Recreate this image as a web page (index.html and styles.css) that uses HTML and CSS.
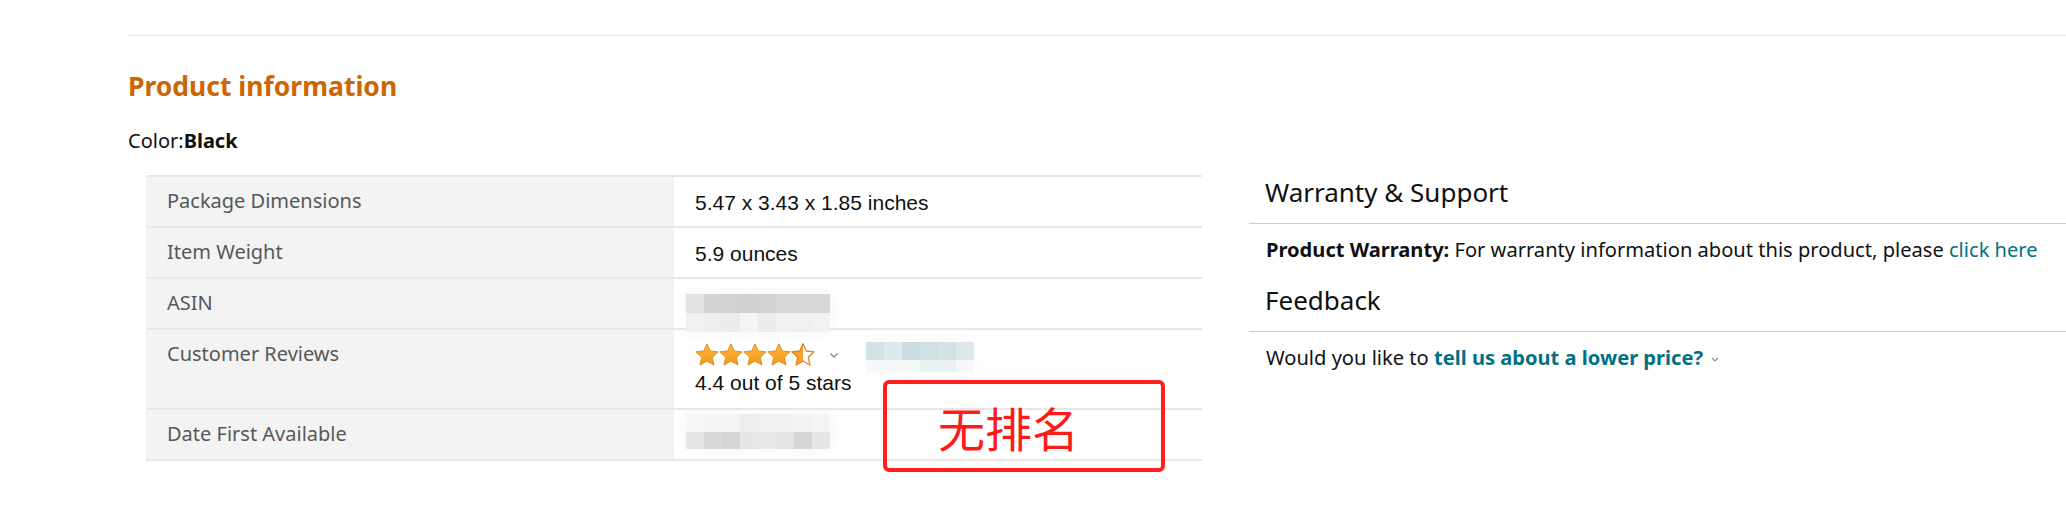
FILE: index.html
```html
<!DOCTYPE html>
<html lang="en">
<head>
<meta charset="utf-8">
<title>Product information</title>
<link rel="stylesheet" href="styles.css">
</head>
<body>
<div class="page">
  <hr class="rule">
  <h2 class="title">Product information</h2>
  <div class="color-line">Color:<b>Black</b></div>
  <div class="content">
    <div class="table-wrap">
      <table class="specs">
        <tr><th>Package Dimensions</th><td>5.47 x 3.43 x 1.85 inches</td></tr>
        <tr><th>Item Weight</th><td>5.9 ounces</td></tr>
        <tr><th>ASIN</th><td><div class="blur blur-asin"><span></span><span></span><span></span><span></span><span></span><span></span><span></span><span></span><span></span><span></span><span></span><span></span><span></span><span></span><span></span><span></span></div></td></tr>
        <tr class="reviews"><th>Customer Reviews</th><td>
          <div class="stars-line">
            <svg class="stars" width="120" height="24" viewBox="0 0 120 24">
              <defs>
                <linearGradient id="g" x1="0" y1="0" x2="0" y2="1">
                  <stop offset="0" stop-color="#ffb547"/>
                  <stop offset="1" stop-color="#f7990f"/>
                </linearGradient>
                <linearGradient id="h" x1="0" y1="0" x2="1" y2="0">
                  <stop offset="0.5" stop-color="#fba427"/>
                  <stop offset="0.5" stop-color="#ffffff"/>
                </linearGradient>
                <path id="st" d="M12 0.8 L15.3 8 L23.1 8.8 L17.3 14.2 L18.9 22 L12 18 L5.1 22 L6.7 14.2 L0.9 8.8 L8.7 8 Z"/>
              </defs>
              <g stroke="#e2821a" stroke-width="0.9" stroke-linejoin="round">
                <use href="#st" x="0" fill="url(#g)"/>
                <use href="#st" x="24" fill="url(#g)"/>
                <use href="#st" x="48" fill="url(#g)"/>
                <use href="#st" x="72" fill="url(#g)"/>
                <use href="#st" x="96" fill="url(#h)" stroke-width="1.3"/>
              </g>
            </svg>
            <svg class="chev" width="10" height="7" viewBox="0 0 10 7"><path d="M1.5 1.5 L5 5 L8.5 1.5" fill="none" stroke="#8a8d8d" stroke-width="1.4"/></svg>
            <div class="blur blur-count"><span></span><span></span><span></span><span></span><span></span><span></span><span></span><span></span><span></span><span></span><span></span><span></span></div>
          </div>
          <div class="rating-text">4.4 out of 5 stars</div>
        </td></tr>
        <tr><th>Date First Available</th><td><div class="blur blur-date"><span></span><span></span><span></span><span></span><span></span><span></span><span></span><span></span><span></span><span></span><span></span><span></span><span></span><span></span><span></span><span></span></div></td></tr>
      </table>
      <div class="annotation">无排名</div>
    </div>
    <div class="side">
      <h3 class="side-title">Warranty &amp; Support</h3>
      <p class="side-text"><b>Product Warranty:</b> For warranty information about this product, please <a href="#">click here</a></p>
      <h3 class="side-title">Feedback</h3>
      <p class="side-text">Would you like to <a href="#" class="strong-link">tell us about a lower price?</a> <svg class="chev small" width="10" height="7" viewBox="0 0 10 7"><path d="M2 2 L5 5 L8 2" fill="none" stroke="#8a8d8d" stroke-width="1.2"/></svg></p>
    </div>
  </div>
</div>
</body>
</html>
```
FILE: styles.css
```css
html, body {
  margin: 0;
  padding: 0;
  background: #fff;
}
body {
  font-family: "Noto Sans", "Open Sans", Arial, sans-serif;
  color: #0f1111;
}
.page {
  padding: 35px 0 70px 128px;
}
.rule {
  margin: 0;
  border: 0;
  border-top: 1px solid #e7e7e7;
  height: 0;
}
.title {
  margin: 0;
  padding-top: 33px;
  font-size: 26.5px;
  line-height: 34px;
  font-weight: 700;
  color: #cc6600;
}
.color-line {
  margin-top: 25px;
  font-size: 20px;
  line-height: 26px;
}
.color-line b {
  font-weight: 700;
}
.content {
  display: flex;
  margin-top: 21px;
}
.table-wrap {
  position: relative;
  margin-left: 18px;
  width: 1056px;
  flex: none;
}
.specs {
  width: 100%;
  border-collapse: collapse;
  border-top: 2px solid #e7e7e7;
}
.specs th, .specs td {
  border-bottom: 2px solid #e7e7e7;
  vertical-align: top;
  text-align: left;
  line-height: 26px;
}
.specs th {
  width: 486px;
  padding: 11px 21px 12px;
  background: #f3f3f3;
  font-size: 20px;
  font-weight: 400;
  color: #565959;
}
.specs td {
  padding: 13px 21px 10px;
  font-family: "Liberation Sans", Arial, sans-serif;
  font-size: 21px;
  color: #0f1111;
}
.reviews td {
  padding-top: 14px;
  padding-bottom: 12px;
}
.stars-line {
  display: flex;
  align-items: center;
  height: 30px;
  margin-top: -4px;
}
.stars {
  display: block;
  flex: none;
}
.chev {
  display: block;
  flex: none;
  margin-left: 14px;
}
.rating-text {
  line-height: 26px;
}
.blur {
  display: grid;
  grid-auto-flow: column;
  grid-auto-columns: 18px;
  width: max-content;
  border-radius: 10px;
  box-shadow: 0 0 8px 7px #fbfbfb;
  background: #fbfbfb;
}
.blur span { display: block; }
.blur-asin {
  grid-template-rows: 19px 19px;
  margin: 2px 0 -14px -9px;
}
.blur-date {
  grid-template-rows: 18px 17px;
  margin: -9px 0 0 -9px;
}
.blur-asin span:nth-child(1) { background: #e2e2e2; }
.blur-asin span:nth-child(2) { background: #f1f1f1; }
.blur-asin span:nth-child(3) { background: #d4d4d4; }
.blur-asin span:nth-child(4) { background: #eeeeee; }
.blur-asin span:nth-child(5) { background: #d2d2d2; }
.blur-asin span:nth-child(6) { background: #ececec; }
.blur-asin span:nth-child(7) { background: #cfd1d2; }
.blur-asin span:nth-child(8) { background: #f3f5f6; }
.blur-asin span:nth-child(9) { background: #d3d3d3; }
.blur-asin span:nth-child(10) { background: #ececec; }
.blur-asin span:nth-child(11) { background: #d7d8d9; }
.blur-asin span:nth-child(12) { background: #f1f1f1; }
.blur-asin span:nth-child(13) { background: #d8d8d8; }
.blur-asin span:nth-child(14) { background: #f0f0f0; }
.blur-asin span:nth-child(15) { background: #d5d8d9; }
.blur-asin span:nth-child(16) { background: #f2f2f2; }

.blur-date span:nth-child(1) { background: #f6f6f6; }
.blur-date span:nth-child(2) { background: #e6e6e6; }
.blur-date span:nth-child(3) { background: #f4f4f4; }
.blur-date span:nth-child(4) { background: #d8d8d8; }
.blur-date span:nth-child(5) { background: #f4f4f4; }
.blur-date span:nth-child(6) { background: #d5d5d5; }
.blur-date span:nth-child(7) { background: #eeeeee; }
.blur-date span:nth-child(8) { background: #e6e6e6; }
.blur-date span:nth-child(9) { background: #f0f0f0; }
.blur-date span:nth-child(10) { background: #e8e8e8; }
.blur-date span:nth-child(11) { background: #f1f1f1; }
.blur-date span:nth-child(12) { background: #e4e4e4; }
.blur-date span:nth-child(13) { background: #f2f2f2; }
.blur-date span:nth-child(14) { background: #d6d6d6; }
.blur-date span:nth-child(15) { background: #f4f4f4; }
.blur-date span:nth-child(16) { background: #e6e6e6; }

.blur-count {
  align-self: flex-start;
  margin: 2px 0 0 27px;
  grid-template-rows: 18px 12px;
  background: #fdfdfd;
  box-shadow: 0 0 8px 6px #fdfdfd;
}
.blur-count span:nth-child(odd) { background: #d3e2e5; }
.blur-count span:nth-child(even) { background: #f4f8f9; }
.blur-count span:nth-child(3) { background: #dde9eb; }
.blur-count span:nth-child(5) { background: #c9dde0; }
.blur-count span:nth-child(7) { background: #cfe0e3; }
.blur-count span:nth-child(8) { background: #eaf1f2; }
.blur-count span:nth-child(10) { background: #eaf1f2; }
.blur-count span:nth-child(11) { background: #dde8ea; }

.annotation {
  position: absolute;
  left: 737px;
  top: 205px;
  box-sizing: border-box;
  width: 282px;
  height: 92px;
  padding-left: 51px;
  border: 4px solid #ff1f1f;
  border-radius: 6px;
  display: flex;
  align-items: center;
  justify-content: flex-start;
  color: #ff1a1a;
  font-family: "Noto Sans CJK SC", sans-serif;
  font-size: 47px;
  font-weight: 400;
  line-height: 1;
}
.side {
  flex: 1;
  margin-left: 47px;
}
.side-title {
  margin: 0;
  padding: 0 16px 14px;
  font-size: 26px;
  line-height: 34px;
  font-weight: 400;
  color: #0f1111;
  border-bottom: 1px solid #cccccc;
}
.side-text {
  margin: 0;
  padding: 13px 17px 20px;
  font-size: 20.1px;
  line-height: 26px;
}
.side-text a {
  color: #007185;
  text-decoration: none;
}
.side-text .strong-link {
  font-weight: 700;
}
.chev.small {
  display: inline-block;
  margin-left: 2px;
  vertical-align: middle;
}
```
